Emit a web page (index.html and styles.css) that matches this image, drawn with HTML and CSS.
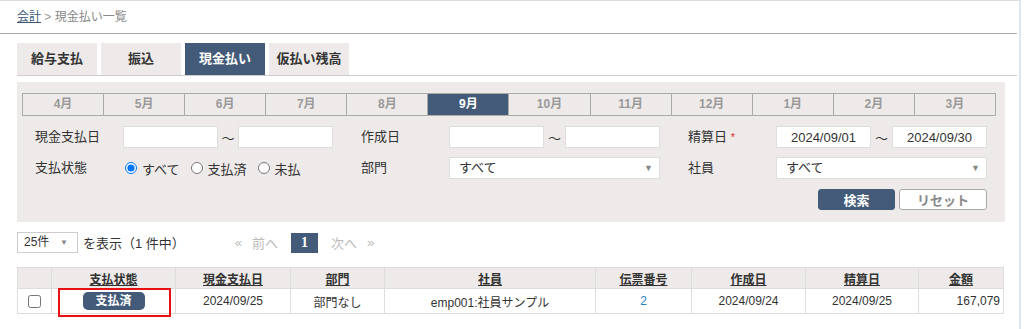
FILE: index.html
```html
<!DOCTYPE html>
<html lang="ja">
<head>
  <meta charset="UTF-8">
  <title>現金払い一覧</title>
  <link rel="stylesheet" href="styles.css">
</head>
<body>
  <div class="page">
    <div class="breadcrumb">
      <a href="#">会計</a> <span class="sep">&gt;</span> 現金払い一覧
    </div>

    <div class="tabs">
      <div class="tab">給与支払</div>
      <div class="tab">振込</div>
      <div class="tab active">現金払い</div>
      <div class="tab">仮払い残高</div>
    </div>

    <!-- search panel -->
    <div class="panel">
      <div class="months">
        <div class="month">4月</div>
        <div class="month">5月</div>
        <div class="month">6月</div>
        <div class="month">7月</div>
        <div class="month">8月</div>
        <div class="month active">9月</div>
        <div class="month">10月</div>
        <div class="month">11月</div>
        <div class="month">12月</div>
        <div class="month">1月</div>
        <div class="month">2月</div>
        <div class="month">3月</div>
      </div>

      <div class="form">
        <label>現金支払日</label>
        <div class="range">
          <input type="text"><span class="tilde">〜</span><input type="text">
        </div>
        <span></span>
        <label>作成日</label>
        <div class="range">
          <input type="text"><span class="tilde">〜</span><input type="text">
        </div>
        <span></span>
        <label>精算日 <span class="req">*</span></label>
        <div class="range">
          <input type="text" value="2024/09/01"><span class="tilde">〜</span><input type="text" value="2024/09/30">
        </div>

        <label>支払状態</label>
        <div class="radios">
          <label class="radio"><input type="radio" name="st" checked>すべて</label>
          <label class="radio"><input type="radio" name="st">支払済</label>
          <label class="radio"><input type="radio" name="st">未払</label>
        </div>
        <span></span>
        <label>部門</label>
        <div class="select">すべて<span class="caret">▼</span></div>
        <span></span>
        <label>社員</label>
        <div class="select">すべて<span class="caret">▼</span></div>
      </div>

      <div class="actions">
        <button class="btn primary">検索</button>
        <button class="btn">リセット</button>
      </div>
    </div>

    <div class="pager-row">
      <div class="per-page">25件<span class="caret">▼</span></div>
      <span class="count">を表示（1 件中）</span>
      <div class="pager">
        <span class="dim">«</span>
        <span class="dim">前へ</span>
        <span class="current">1</span>
        <span class="dim">次へ</span>
        <span class="dim">»</span>
      </div>
    </div>

    <table class="list">
      <colgroup>
        <col style="width: 34px">
        <col style="width: 124px">
        <col style="width: 115px">
        <col style="width: 94px">
        <col style="width: 211px">
        <col style="width: 96px">
        <col style="width: 114px">
        <col style="width: 113px">
        <col style="width: 85px">
      </colgroup>
      <thead>
        <tr>
          <th></th>
          <th><u>支払状態</u></th>
          <th><u>現金支払日</u></th>
          <th><u>部門</u></th>
          <th><u>社員</u></th>
          <th><u>伝票番号</u></th>
          <th><u>作成日</u></th>
          <th><u>精算日</u></th>
          <th><u>金額</u></th>
        </tr>
      </thead>
      <tbody>
        <tr>
          <td><input type="checkbox"></td>
          <td class="status-cell"><span class="badge">支払済</span><span class="highlight"></span></td>
          <td>2024/09/25</td>
          <td>部門なし</td>
          <td>emp001:社員サンプル</td>
          <td><a href="#">2</a></td>
          <td>2024/09/24</td>
          <td>2024/09/25</td>
          <td class="num">167,079</td>
        </tr>
      </tbody>
    </table>
  </div>
</body>
</html>
```

FILE: styles.css
```css
body {
  margin: 0;
  background-color: #fff;
  font-family: "Liberation Sans", "Noto Sans CJK JP", sans-serif;
  font-size: 13px;
  color: #333;
}

.page {
  width: 1021px;
  height: 329px;
  border-top: 1px solid #dcdcdc;
  border-right: 2px solid #dfe6f2;
  box-sizing: border-box;
}

.breadcrumb {
  height: 32px;
  line-height: 32px;
  padding-left: 17px;
  font-size: 12px;
  color: #888;
  border-bottom: 1px solid #aaa;
  margin-right: 2px;
}

.breadcrumb a {
  color: #3c5878;
}

.breadcrumb .sep {
  color: #999;
}

.tabs {
  display: flex;
  gap: 4px;
  margin: 9px 2px 0 17px;
  border-bottom: 1px solid #ccc;
}

.tab {
  width: 80px;
  height: 32px;
  line-height: 32px;
  text-align: center;
  background-color: #eeeae9;
  font-weight: bold;
  color: #333;
}

.tab.active {
  background-color: #435b78;
  color: #fff;
}

.panel {
  width: 988px;
  margin: 6px 0 0 17px;
  padding: 11px 0 12px 5px;
  box-sizing: border-box;
  background-color: #eeeae9;
}

.months {
  display: flex;
  width: 974px;
  height: 23px;
  border: 1px solid #aaa;
  box-sizing: border-box;
}

.month {
  flex: 1;
  text-align: center;
  line-height: 21px;
  font-size: 12px;
  font-weight: bold;
  color: #999;
  border-right: 1px solid #aaa;
}

.month:last-child {
  border-right: none;
}

.month.active {
  background-color: #435b78;
  color: #fff;
}

.form {
  display: grid;
  grid-template-columns: 88px 210px 28px 88px 211px 28px 88px 211px;
  row-gap: 9px;
  margin: 10px 0 0 13px;
  align-items: center;
}

.form > label {
  height: 22px;
  line-height: 22px;
}

.req {
  color: #e03030;
  font-size: 11px;
  vertical-align: top;
}

.range {
  display: flex;
  align-items: center;
}

.range input {
  width: 95px;
  height: 22px;
  box-sizing: border-box;
  border: 1px solid #ddd;
  background-color: #fff;
  padding: 0;
  text-align: center;
  font-family: "Liberation Sans", "Noto Sans CJK JP", sans-serif;
  font-size: 13px;
  color: #333;
}

.range .tilde {
  flex: 1;
  text-align: center;
}

.radios {
  display: flex;
  gap: 9px;
  height: 22px;
  align-items: center;
}

.radio {
  display: flex;
  align-items: center;
}

.radio input {
  margin: 0 5px 0 2px;
  width: 12px;
  height: 12px;
}

.select {
  position: relative;
  height: 22px;
  line-height: 20px;
  box-sizing: border-box;
  border: 1px solid #ddd;
  background-color: #fff;
  padding-left: 9px;
}

.select .caret {
  position: absolute;
  right: 6px;
  top: 0;
  font-size: 9px;
  color: #888;
}

.actions {
  display: flex;
  justify-content: flex-end;
  gap: 4px;
  margin: 10px 18px 0 0;
}

.btn {
  height: 21px;
  width: 88px;
  padding: 0;
  border: 1px solid #aaa;
  border-radius: 3px;
  background-color: #fff;
  color: #888;
  font-family: "Liberation Sans", "Noto Sans CJK JP", sans-serif;
  font-size: 13px;
  font-weight: bold;
}

.btn.primary {
  width: 77px;
  background-color: #435b78;
  border-color: #435b78;
  color: #fff;
}

.pager-row {
  display: flex;
  align-items: center;
  height: 21px;
  margin: 10px 0 0 17px;
}

.per-page {
  position: relative;
  width: 61px;
  height: 21px;
  line-height: 19px;
  box-sizing: border-box;
  border: 1px solid #ccc;
  padding-left: 6px;
  font-size: 12px;
}

.per-page .caret {
  position: absolute;
  right: 9px;
  font-size: 8px;
  color: #888;
}

.count {
  margin-left: 5px;
}

.pager {
  display: flex;
  align-items: center;
  gap: 10px;
  margin-left: 50px;
}

.pager .dim {
  color: #bbb;
}

.pager .current {
  width: 27px;
  height: 20px;
  line-height: 20px;
  margin: 0 3px;
  text-align: center;
  background-color: #435b78;
  color: #fff;
  font-family: "Liberation Serif", serif;
  font-weight: bold;
  font-size: 14px;
}

.list {
  margin: 14px 0 0 17px;
  width: 986px;
  border-collapse: collapse;
  table-layout: fixed;
  font-size: 12px;
}

.list th,
.list td {
  border: 1px solid #ddd;
  text-align: center;
  padding: 0;
}

.list th {
  height: 20px;
  background-color: #eeeae9;
  font-weight: bold;
}

.list td {
  height: 24px;
}

.list td a {
  color: #2a7fc0;
  text-decoration: none;
}

.list td input {
  margin: 0;
  width: 13px;
  height: 13px;
  vertical-align: middle;
}

.list td.num {
  text-align: right;
  padding-right: 3px;
}

.status-cell {
  position: relative;
}

.badge {
  display: inline-block;
  width: 62px;
  height: 18px;
  line-height: 18px;
  border-radius: 5px;
  background-color: #435b78;
  color: #fff;
  font-weight: bold;
  vertical-align: middle;
}

/* annotation box */
.highlight {
  position: absolute;
  left: 6px;
  top: -1px;
  width: 113px;
  height: 29px;
  box-sizing: border-box;
  border: 2px solid #e81010;
}
```
